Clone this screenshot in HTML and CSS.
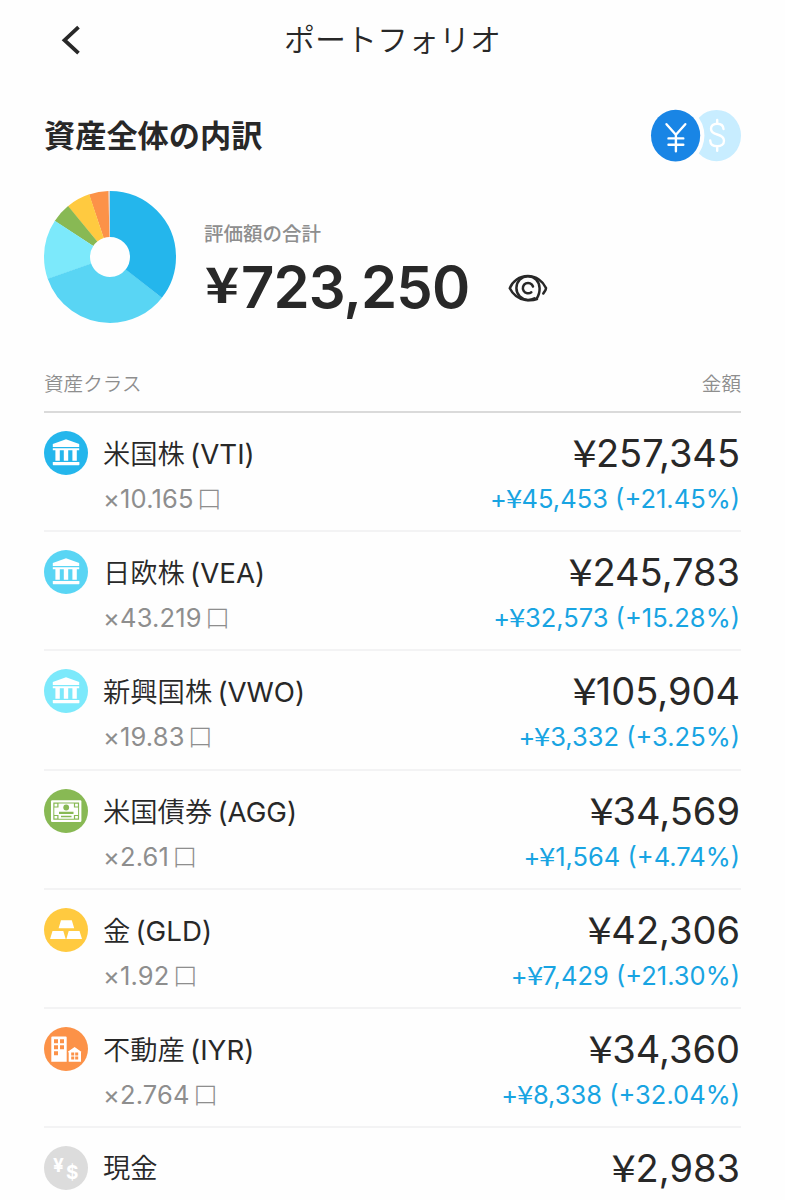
FILE: index.html
```html
<!DOCTYPE html>
<html lang="ja">
<head>
<meta charset="UTF-8">
<title>ポートフォリオ</title>
<link rel="stylesheet" href="styles.css">
</head>
<body>
<!-- 共通アイコン -->
<svg class="defs" width="0" height="0">
  <symbol id="bank" viewBox="0 0 44 44">
    <path d="M8.800 15.900V13L22 8.200 35.200 13v2.900z"/>
    <path d="M8.800 17.200h26.400v2H8.800zM11.400 18.500h4.400v11.200h-4.400zM19.800 18.500h4.400v11.200h-4.400zM28.400 18.500h4.400v11.200h-4.400z"/>
    <rect x="8.800" y="31" width="26.600" height="3.200" rx=".6"/>
  </symbol>
</svg>

<header class="nav">
  <svg class="back" width="20" height="30" viewBox="0 0 20 30"><path d="M17.500 2.200L3.500 15.200l14 13"/></svg>
  <h1>ポートフォリオ</h1>
</header>

<main class="page">
  <div class="title-row">
    <h2>資産全体の内訳</h2>
    <svg class="currency" width="91" height="54" viewBox="0 0 91 54">
      <ellipse cx="66.5" cy="26.600" rx="24.500" ry="25.700" fill="#c8edff"/>
      <ellipse cx="25.600" cy="26.600" rx="28.800" ry="30" fill="#fefefe"/>
      <ellipse cx="25.600" cy="26.600" rx="24.600" ry="25.800" fill="#1985e5"/>
      <path class="symbol" d="M73.500 20c-.3-3.500-2.700-5.300-6.300-5.300-3.600 0-6.200 1.800-6.200 5 0 3.300 2 4.700 6.300 5.800 4.500 1.200 6.700 3 6.700 6.300 0 3.500-2.800 5.500-6.800 5.500-4.100 0-6.800-2-7-5.800M67.200 11v3.700M67.200 37.500v4.300"/>
      <path class="symbol" d="M16.500 15.200l9.400 10.500 9.400-10.500M25.900 25.700v16.500M18.500 29.400h14.800M18.500 35.800h14.800"/>
    </svg>
  </div>

  <section class="summary">
    <svg class="donut" width="132" height="132" viewBox="0 0 132 132">
      <g transform="rotate(-90 66 66)">
        <circle cx="66" cy="66" r="43" pathLength="100" stroke="#d3d3d3" stroke-dasharray="0 99.590 .41 1"/>
        <circle cx="66" cy="66" r="43" pathLength="100" stroke="#fc9248" stroke-dasharray="0 94.840 4.750 1"/>
        <circle cx="66" cy="66" r="43" pathLength="100" stroke="#ffca40" stroke-dasharray="0 88.990 5.900 100"/>
        <circle cx="66" cy="66" r="43" pathLength="100" stroke="#88b954" stroke-dasharray="0 84.210 4.830 100"/>
        <circle cx="66" cy="66" r="43" pathLength="100" stroke="#7ce9fb" stroke-dasharray="0 69.570 14.700 100"/>
        <circle cx="66" cy="66" r="43" pathLength="100" stroke="#59d5f4" stroke-dasharray="0 35.580 34.040 100"/>
        <circle cx="66" cy="66" r="43" pathLength="100" stroke="#24b6ec" stroke-dasharray="35.630 100"/>
      </g>
    </svg>
    <div class="total">
      <p class="total-label">評価額の合計</p>
      <p class="total-value"><span class="yen">¥</span>723,250</p>
    </div>
    <svg class="eye" width="40" height="30" viewBox="0 0 40 30">
      <path d="M29 26C25.500 27.300 21 27.300 17.500 26.900 10.500 26 4.500 21 1.800 15.200 4.500 8.300 11.500 3 19.800 3S35 8.300 38 14.900c.2 1.900-1.300 3.700-2.700 5.500"/>
      <path d="M28.600 25.400c1.900-2.500 3.100-6 3-10.200C31.400 8.500 26.500 3.300 20 3.300S8.400 8.500 8.400 15.100s5.100 11.800 11.600 11.800c2.500 0 4.500-.3 6.500-1.700"/>
      <path d="M25 13.500a5.200 5.200 0 1 0-1.700 5.700"/>
    </svg>
  </section>

  <div class="list-head"><span>資産クラス</span><span>金額</span></div>
  <ul class="list">
    <li class="row">
      <svg class="icon us" viewBox="0 0 44 44"><use href="#bank"/></svg>
      <div class="asset"><p class="name">米国株 <span>(VTI)</span></p><p class="units">×10.165<span>口</span></p></div>
      <div class="money"><p class="amount"><span class="yen">¥</span>257,345</p><p class="profit">+<span class="yen">¥</span>45,453 (+21.45%)</p></div>
    </li>
    <li class="row">
      <svg class="icon eu" viewBox="0 0 44 44"><use href="#bank"/></svg>
      <div class="asset"><p class="name">日欧株 <span>(VEA)</span></p><p class="units">×43.219<span>口</span></p></div>
      <div class="money"><p class="amount"><span class="yen">¥</span>245,783</p><p class="profit">+<span class="yen">¥</span>32,573 (+15.28%)</p></div>
    </li>
    <li class="row">
      <svg class="icon em" viewBox="0 0 44 44"><use href="#bank"/></svg>
      <div class="asset"><p class="name">新興国株 <span>(VWO)</span></p><p class="units">×19.83<span>口</span></p></div>
      <div class="money"><p class="amount"><span class="yen">¥</span>105,904</p><p class="profit">+<span class="yen">¥</span>3,332 (+3.25%)</p></div>
    </li>
    <li class="row">
      <svg class="icon bond" viewBox="0 0 44 44">
        <rect x="7" y="11.300" width="30.400" height="21.700" rx="1.200"/>
        <path class="cut" d="M9.300 13.600h25.800v17.100H9.300z"/>
        <path d="M14.500 14.600h15.400v3.800h4.200v7.500h-4.200v3.800H14.500v-3.800h-4.200v-7.500h4.200z"/>
        <path d="M10.500 14.800h2.800v2.600h-2.800zM31.100 14.800h2.800v2.600h-2.800zM10.500 26.900h2.800v2.600h-2.800zM31.100 26.900h2.800v2.600h-2.800z"/>
        <path class="cut" d="M15 22.800h14.500v2.100H15zM17 26.700h10.500v1.600H17z"/>
        <circle class="cut" cx="22.200" cy="18.500" r="2.900"/>
      </svg>
      <div class="asset"><p class="name">米国債券 <span>(AGG)</span></p><p class="units">×2.61<span>口</span></p></div>
      <div class="money"><p class="amount"><span class="yen">¥</span>34,569</p><p class="profit">+<span class="yen">¥</span>1,564 (+4.74%)</p></div>
    </li>
    <li class="row">
      <svg class="icon gold" viewBox="0 0 44 44"><path d="M17 12.200h10.800l2.400 8H14.600zM8.500 23h10.800l2.400 8H6.100zM24.700 23h10.800l2.500 8H22.400z"/></svg>
      <div class="asset"><p class="name">金 <span>(GLD)</span></p><p class="units">×1.92<span>口</span></p></div>
      <div class="money"><p class="amount"><span class="yen">¥</span>42,306</p><p class="profit">+<span class="yen">¥</span>7,429 (+21.30%)</p></div>
    </li>
    <li class="row">
      <svg class="icon estate" viewBox="0 0 44 44">
        <path d="M8.300 9.500h13.400a1 1 0 0 1 1 1v24.300H7.300V10.500a1 1 0 0 1 1-1zM24.700 34.800V25.500L23.800 24.800l6.800-4.800 6.700 4.800-.3.700v9.300z"/>
        <path class="cut" d="M10 12.300h4v4h-4zM16 12.300h4v4h-4zM10 18.200h4v4h-4zM16 18.200h4v4h-4zM10 24.200h4v4h-4zM27.200 25.600h3v2.900h-3zM31.200 25.600h3v2.900h-3zM27.200 29.500h3v2.900h-3zM31.200 29.500h3v2.900h-3z"/>
      </svg>
      <div class="asset"><p class="name">不動産 <span>(IYR)</span></p><p class="units">×2.764<span>口</span></p></div>
      <div class="money"><p class="amount"><span class="yen">¥</span>34,360</p><p class="profit">+<span class="yen">¥</span>8,338 (+32.04%)</p></div>
    </li>
    <li class="row">
      <svg class="icon cash" viewBox="0 0 44 44"><text x="9" y="26">¥</text><text x="22" y="33">$</text></svg>
      <div class="asset"><p class="name">現金</p></div>
      <div class="money"><p class="amount"><span class="yen">¥</span>2,983</p></div>
    </li>
  </ul>
</main>
</body>
</html>
```
FILE: styles.css
```css
* {
  margin: 0;
  padding: 0;
  box-sizing: border-box;
}

body {
  height: 1200px;
  overflow: hidden;
  background-color: #fefefe;
  color: #282828;
  font-family: Inter, "Noto Sans CJK JP", sans-serif;
  white-space: nowrap;
}

.defs {
  display: block;
}

.nav {
  height: 80px;
  display: grid;
  grid-template-columns: 100px 1fr 100px;
  align-items: center;
}

.back {
  margin-left: 61px;
}

.back path {
  fill: none;
  stroke: #282828;
  stroke-width: 3.8;
}

.nav h1 {
  text-align: center;
  font-size: 31px;
  line-height: 40px;
  font-weight: 350;
}

.page {
  padding: 0 44px;
}

.title-row {
  height: 111px;
  padding-top: 29px;
  display: flex;
  justify-content: space-between;
  align-items: flex-start;
}

.title-row h2 {
  padding-top: 5px;
  font-size: 31.2px;
  line-height: 44px;
  font-weight: 700;
}

.symbol {
  fill: none;
  stroke: #fff;
  stroke-width: 2.4;
  stroke-linecap: round;
}

.summary {
  height: 172px;
  display: flex;
  align-items: flex-start;
}

.donut circle {
  fill: none;
  stroke-width: 46;
}

.total {
  width: 304px;
  padding: 28px 0 0 28px;
}

.total-label {
  color: #8e8e8e;
  font-size: 19.5px;
  line-height: 30px;
  font-weight: 500;
}

.total-value {
  padding-left: 1px;
  font-size: 58px;
  line-height: 77px;
  font-weight: 600;
  letter-spacing: -0.9px;
}

.yen {
  display: inline-block;
  font-family: "Noto Sans CJK JP", sans-serif;
  line-height: 1;
  transform: scaleX(1.15);
}

.total-value .yen {
  width: 36px;
  font-size: 49px;
  font-weight: 700;
  vertical-align: 5px;
  transform: scaleX(1.18);
  transform-origin: left;
}

.eye {
  margin: 82px 0 0 28px;
}

.eye path {
  fill: none;
  stroke: #282828;
  stroke-width: 2.5;
  stroke-linecap: round;
}

.list-head {
  height: 50px;
  padding-top: 1px;
  border-bottom: 2px solid #dadada;
  display: flex;
  justify-content: space-between;
  color: #8e8e8e;
  font-size: 19.6px;
  line-height: 40px;
  font-weight: 350;
}

.list {
  list-style: none;
}

.row {
  height: 119.2px;
  padding-top: 18px;
  border-bottom: 2px solid #f3f3f4;
  display: flex;
  align-items: flex-start;
}

.icon {
  width: 44px;
  height: 44px;
  border-radius: 50%;
  fill: #fff;
}

.us { background-color: #24b6ec; }
.eu { background-color: #59d5f4; }
.em { background-color: #7ce9fb; }
.bond { background-color: #88b954; }
.gold { background-color: #ffca40; }
.estate { background-color: #fc9248; }
.cash { background-color: #dcdcdc; }

.bond .cut { fill: #88b954; }
.estate .cut { fill: #fc9248; }

.cash text {
  font-family: Inter, sans-serif;
  font-size: 19px;
  font-weight: 700;
}

.asset {
  flex: 1;
  padding-left: 15px;
}

.name {
  padding-top: 1px;
  font-size: 27.3px;
  line-height: 44px;
  font-weight: 350;
  word-spacing: -2.5px;
}

.name span {
  font-size: 27.7px;
  font-weight: 400;
}

.units {
  color: #8e8e8e;
  font-size: 25.5px;
  line-height: 44px;
  letter-spacing: 0.15px;
}

.units span {
  margin-left: 3px;
  font-size: 25.5px;
  font-weight: 300;
}

.money {
  padding-right: 1px;
  text-align: right;
}

.amount {
  font-size: 38px;
  line-height: 44px;
}

.amount .yen {
  margin-right: 1px;
}

.profit {
  margin-top: 2px;
  color: #18a4e2;
  font-size: 25.5px;
  line-height: 44px;
}

.profit .yen {
  margin-right: 0.5px;
}
```
